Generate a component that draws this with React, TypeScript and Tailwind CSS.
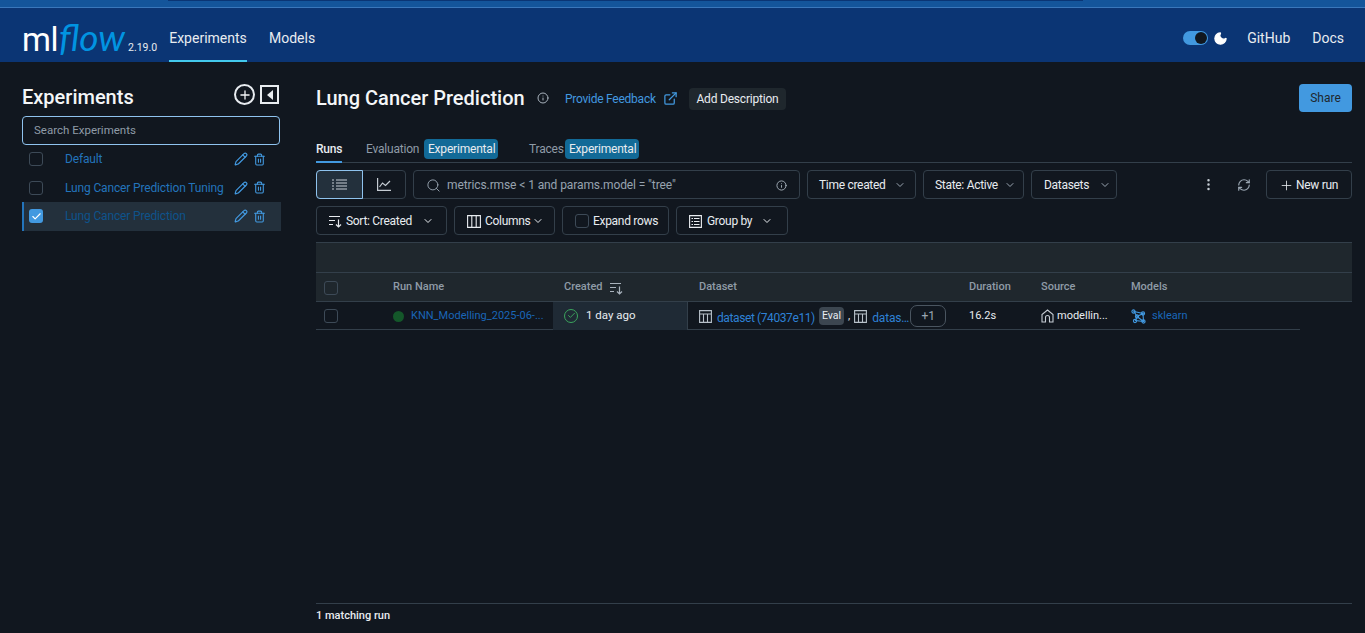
import { ChevronDown, Check, ExternalLink, Info, Pencil, Plus, RefreshCw, Search, Trash2, EllipsisVertical, Moon } from "lucide-react";
import type { ReactNode } from "react";

const EXPERIMENTS = [
  { name: "Default", selected: false },
  { name: "Lung Cancer Prediction Tuning", selected: false },
  { name: "Lung Cancer Prediction", selected: true }
];

function SortIcon() {
  return (
    <svg width="15" height="14" viewBox="0 0 15 14" fill="none" stroke="currentColor" strokeWidth="1.2">
      <path d="M1 2.5h11M1 6.5h6M1 10.5h4M10.5 5.5v7.5M8 10.5l2.5 2.5 2.5-2.5" />
    </svg>
  );
}

function TableIcon() {
  return (
    <svg width="13" height="13" viewBox="0 0 13 13" fill="none" stroke="currentColor" strokeWidth="1.1">
      <path d="M.6.6h11.8v11.8H.6zM.6 4h11.8M4.5 4v8.4M8.5 4v8.4" />
    </svg>
  );
}

function ToolButton({ className, children }: { className: string; children: ReactNode }) {
  return (
    <div
      className={`flex h-[29px] shrink-0 items-center rounded border border-[#333f4a] pt-px text-[12px] tracking-[-0.3px] text-[#e8ecf0] ${className}`}
    >
      {children}
    </div>
  );
}

function Box({ className = "" }: { className?: string }) {
  return <span className={`block size-[14px] shrink-0 rounded-[3px] border border-[#3d4a57] ${className}`} />;
}

function Header() {
  return (
    <header className="shrink-0">
      <div className="h-[7px] bg-[#14559b]">
        <div className="ml-[168px] h-px w-[915px] bg-[#0b3574]" />
      </div>
      <div className="h-px bg-[#3a77bb]" />
      <div className="flex h-[54px] items-center bg-[#0b3574] pl-[22px] pr-[21px] text-[#e8ecf0]">
        <div className="flex w-[147px] items-baseline pt-[3px]">
          <span className="text-[33px] font-normal leading-none tracking-[-0.5px] text-white">ml</span>
          <span className="ml-px font-['Lato'] text-[37px] font-normal italic leading-none text-[#0194e2]">flow</span>
          <span className="ml-[3px] text-[10.5px] text-[#e8ecf0]">2.19.0</span>
        </div>
        <div className="relative flex h-full w-[78px] items-center justify-center pt-[6px] text-[14px]">
          Experiments
          <span className="absolute inset-x-0 bottom-0 h-[2px] bg-[#43c9ed]" />
        </div>
        <span className="ml-[22px] pt-[6px] text-[14px]">Models</span>
        <div className="ml-auto flex items-center pt-[6px]">
          <span className="relative h-[14px] w-[25px] rounded-full bg-[#4299e0]">
            <span className="absolute right-[1px] top-[1px] size-[12px] rounded-full bg-[#11171f]" />
          </span>
          <Moon className="ml-[5px] size-[15px] fill-white text-white" />
          <span className="ml-[19px] text-[14px]">GitHub</span>
          <span className="ml-[22px] text-[14px]">Docs</span>
        </div>
      </div>
    </header>
  );
}

function Sidebar() {
  return (
    <aside className="w-[316px] shrink-0 pl-[22px] pt-[19px]">
      <div className="flex h-[35px] w-[258px] items-start text-[#f4f6f8]">
        <h2 className="text-[20px] font-medium leading-[32px]">Experiments</h2>
        <span className="ml-auto mt-[3px] flex size-[21px] items-center justify-center rounded-full border-2 border-[#e8ecf0]">
          <Plus className="size-[14px]" strokeWidth={2.2} />
        </span>
        <span className="ml-[5px] mr-px mt-[4px] flex size-[19px] items-center justify-center border-2 border-[#e8ecf0]">
          <span className="h-0 w-0 border-y-[5px] border-r-[6px] border-y-transparent border-r-[#e8ecf0]" />
        </span>
      </div>
      <div className="flex h-[29px] w-[258px] items-center rounded border border-[#8fc3ee] pl-[11px] pt-px text-[11.5px] text-[#8f9ba7]">
        Search Experiments
      </div>
      <ul className="w-[259px]">
        {EXPERIMENTS.map((item) => (
          <li
            key={item.name}
            className={`flex h-[28.5px] items-center border-l-2 pl-[5px] text-[12px] tracking-[-0.15px] ${
              item.selected ? "border-[#2374bb] bg-[#23303c] text-[#0e538b]" : "border-transparent text-[#2374bb]"
            }`}
          >
            {item.selected ? (
              <span className="flex size-[14px] items-center justify-center rounded-[3px] bg-[#4299e0]">
                <Check className="size-[11px] text-white" strokeWidth={2.5} />
              </span>
            ) : (
              <Box />
            )}
            <span className="ml-[22px] w-[168px] whitespace-nowrap">{item.name}</span>
            <Pencil className="ml-px size-[14px] text-[#4299e0]" />
            <Trash2 className="ml-[5px] size-[13px] text-[#4299e0]" />
          </li>
        ))}
      </ul>
    </aside>
  );
}

function Toolbar() {
  return (
    <>
      <div className="mt-[7px] flex items-center gap-[7px]">
        <div className="flex h-[29px] w-[90px] rounded border border-[#333f4a]">
          <span className="-m-px flex w-[47px] items-center justify-center rounded-l border border-[#8fc3ee] bg-[#23303c] text-[#c5ccd3]">
            <svg width="15" height="12" viewBox="0 0 15 12" fill="none" stroke="currentColor" strokeWidth="1.1">
              <path d="M0 1h2M4 1h11M0 4h2M4 4h11M0 7h2M4 7h11M0 10h2M4 10h11" />
            </svg>
          </span>
          <span className="flex flex-1 items-center justify-center text-[#c5ccd3]">
            <svg width="14" height="13" viewBox="0 0 14 13" fill="none" stroke="currentColor" strokeWidth="1.2">
              <path d="M.6 0v12.4H14M2.5 9l3-4 3 2.5L13 3" />
            </svg>
          </span>
        </div>
        <ToolButton className="w-[387px] pl-[12px] pr-[12px]">
          <Search className="size-[15px] text-[#9aa6b2]" strokeWidth={1.5} />
          <span className="ml-[6px] tracking-[-0.1px] text-[#97a3af]">metrics.rmse &lt; 1 and params.model = "tree"</span>
          <Info className="ml-auto size-[11px] text-[#a9b3bd]" />
        </ToolButton>
        <ToolButton className="w-[109px] pl-[11px]">
          Time created
          <ChevronDown className="ml-[8px] size-[12px] text-[#9aa6b2]" />
        </ToolButton>
        <ToolButton className="w-[101px] pl-[11px]">
          State: Active
          <ChevronDown className="ml-[6px] size-[12px] text-[#9aa6b2]" />
        </ToolButton>
        <ToolButton className="w-[86px] pl-[12px]">
          Datasets
          <ChevronDown className="ml-[10px] size-[12px] text-[#9aa6b2]" />
        </ToolButton>
        <EllipsisVertical className="ml-auto size-[15px] text-[#c5ccd3]" />
        <RefreshCw className="ml-[14px] size-[14px] text-[#9aa6b2]" />
        <ToolButton className="ml-[8px] w-[86px] pl-[12px]">
          <Plus className="size-[15px]" strokeWidth={1.3} />
          <span className="ml-[2px]">New run</span>
        </ToolButton>
      </div>
      <div className="mt-[7px] flex items-center gap-[7px]">
        <ToolButton className="w-[131px] pl-[11px]">
          <SortIcon />
          <span className="ml-[3px]">Sort: Created</span>
          <ChevronDown className="ml-[10px] size-[12px]" />
        </ToolButton>
        <ToolButton className="w-[101px] pl-[12px]">
          <svg width="14" height="13" viewBox="0 0 14 13" fill="none" stroke="currentColor" strokeWidth="1.1">
            <path d="M.6.6h12.8v11.8H.6zM4.8.6v11.8M9.2.6v11.8" />
          </svg>
          <span className="ml-[4px]">Columns</span>
          <ChevronDown className="ml-[2px] size-[12px]" />
        </ToolButton>
        <ToolButton className="w-[107px] pl-[12px]">
          <Box />
          <span className="ml-[4px]">Expand rows</span>
        </ToolButton>
        <ToolButton className="w-[112px] pl-[12px]">
          <svg width="13" height="13" viewBox="0 0 13 13" fill="none" stroke="currentColor" strokeWidth="1.1">
            <path d="M.6.6h11.8v11.8H.6zM2.5 3.5h1.5M5 3.5h5.5M2.5 6.5h1.5M5 6.5h5.5M2.5 9.5h1.5M5 9.5h5.5" />
          </svg>
          <span className="ml-[5px]">Group by</span>
          <ChevronDown className="ml-[9px] size-[12px]" />
        </ToolButton>
      </div>
    </>
  );
}

function RunsTable() {
  return (
    <div className="mt-[7px] text-[11px]">
      <div className="h-[31px] border-y border-[#333f4a] bg-[#1f272d]" />
      <div className="flex h-[29px] items-center border-b border-[#333f4a] bg-[#1f272d] pt-px font-medium text-[#8f9ba7]">
        <Box className="ml-[8px]" />
        <span className="ml-[55px] w-[171px]">Run Name</span>
        <span className="flex w-[135px] items-center">
          Created
          <span className="ml-[6px] text-[#a9b3bd]"><SortIcon /></span>
        </span>
        <span className="w-[270px]">Dataset</span>
        <span className="w-[72px]">Duration</span>
        <span className="w-[90px]">Source</span>
        <span>Models</span>
      </div>
      <div className="flex h-[28px] w-[984px] items-center border-b border-[#333f4a] pt-px text-[#e8ecf0]">
        <Box className="ml-[8px]" />
        <span className="ml-[55px] size-[11px] shrink-0 rounded-full bg-[#14572a]" />
        <span className="ml-[7px] w-[142px] whitespace-nowrap text-[#1a66b8]">KNN_Modelling_2025-06-...</span>
        <span className="-mt-px flex h-[28px] w-[135px] shrink-0 items-center border-r border-[#333f4a] bg-[#1f2a35] pl-[11px]">
          <span className="flex size-[14px] items-center justify-center rounded-full border border-[#3ba55d]">
            <Check className="size-[9px] text-[#3ba55d]" strokeWidth={2.5} />
          </span>
          <span className="ml-[8px] text-[11.5px]">1 day ago</span>
        </span>
        <span className="flex w-[281px] shrink-0 items-center pl-[11px]">
          <span className="text-[#b8c1ca]"><TableIcon /></span>
          <span className="ml-[5px] mt-[3px] w-[98px] whitespace-nowrap text-[12px] tracking-[-0.4px] text-[#2e81d6]">dataset (74037e11)</span>
          <span className="ml-[4px] rounded bg-[#3c4650] px-[3px] py-[1px] text-[10.5px] leading-[16px]">Eval</span>
          <span className="mx-[4px]">,</span>
          <span className="text-[#b8c1ca]"><TableIcon /></span>
          <span className="ml-[5px] mt-[3px] w-[35px] whitespace-nowrap text-[12px] tracking-[-0.2px] text-[#2e81d6]">datas…</span>
          <span className="ml-[3px] flex h-[22px] w-[36px] items-center justify-center rounded-[7px] border border-[#4a5560] text-[12px] text-[#9aa6b2]">+1</span>
        </span>
        <span className="w-[72px]">16.2s</span>
        <span className="flex w-[90px] items-center">
          <svg width="13" height="14" viewBox="0 0 13 14" fill="none" stroke="#c5ccd3" strokeWidth="1.1">
            <path d="M1 13V5.5L6.5 1 12 5.5V13H8.5V8.5a2 2 0 0 0-4 0V13z" />
          </svg>
          <span className="ml-[3px]">modellin...</span>
        </span>
        <span className="flex items-center">
          <svg width="15" height="15" viewBox="0 0 15 15" fill="none" stroke="#4299e0" strokeWidth="1.1">
            <path d="M3 2.5l9 2-6 3-3-5zM6 7.5l6.5 5-8-1L6 7.5zM12 4.5l.5 8" />
            <circle cx="2.5" cy="2.5" r="1.6" />
            <circle cx="12" cy="4.5" r="1.6" />
            <circle cx="6" cy="7.5" r="1.6" />
            <circle cx="4" cy="12" r="1.6" />
            <circle cx="12.5" cy="12.5" r="1.6" />
          </svg>
          <span className="ml-[6px] text-[#1a66b8]">sklearn</span>
        </span>
      </div>
    </div>
  );
}

export default function App() {
  return (
    <div className="flex h-screen flex-col overflow-hidden bg-[#11171f] font-['Roboto',sans-serif] text-[#e8ecf0]">
      <Header />
      <div className="flex min-h-0 flex-1">
        <Sidebar />
        <main className="flex min-w-0 flex-1 flex-col pr-[13px]">
          <div className="flex h-[50px] items-center pt-[22px]">
            <h1 className="w-[209px] whitespace-nowrap text-[20px] font-medium text-[#f4f6f8]">Lung Cancer Prediction</h1>
            <Info className="ml-[12px] size-[12px] text-[#a9b3bd]" />
            <span className="ml-[16px] mt-[2px] w-[92px] whitespace-nowrap text-[12px] tracking-[-0.25px] text-[#4299e0]">Provide Feedback</span>
            <ExternalLink className="ml-[6px] mt-px size-[15px] text-[#4299e0]" />
            <span className="ml-[11px] mt-px flex h-[22px] w-[97px] items-center justify-center rounded bg-[#1f272d] text-[12px] tracking-[-0.2px]">Add Description</span>
            <span className="ml-auto flex h-[28px] w-[53px] items-center justify-center rounded bg-[#4299e0] text-[12px] text-[#1f272d]">Share</span>
          </div>
          <div className="mt-[27px] flex h-[24px] items-stretch border-b border-[#333f4a] text-[12px] tracking-[-0.2px] text-[#8f9ba7]">
            <span className="relative flex w-[26px] items-center pb-[4px] font-medium text-[#e8ecf0]">
              Runs
              <span className="absolute inset-x-0 -bottom-px h-[2px] bg-[#4299e0]" />
            </span>
            <div className="ml-[24px] flex items-center pb-[4px]">
              <span className="w-[55px]">Evaluation</span>
              <span className="ml-[3px] w-[74px] rounded bg-[#126a97] px-[4px] py-[1px] text-[#e8ecf0]">Experimental</span>
              <span className="ml-[31px] w-[33px]">Traces</span>
              <span className="ml-[3px] w-[74px] rounded bg-[#126a97] px-[4px] py-[1px] text-[#e8ecf0]">Experimental</span>
            </div>
          </div>
          <Toolbar />
          <RunsTable />
          <div className="mb-[9px] mt-auto flex h-[21px] items-end border-t border-[#333f4a] text-[11px] font-medium">
            1 matching run
          </div>
        </main>
      </div>
    </div>
  );
}
